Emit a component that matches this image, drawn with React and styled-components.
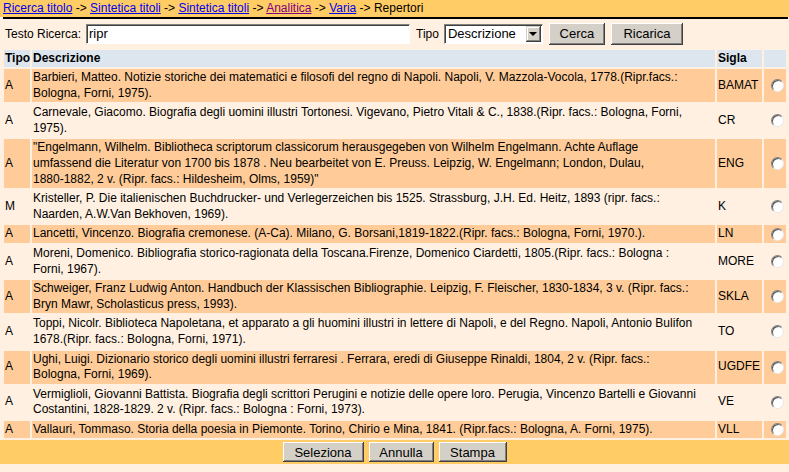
import React from 'react';
import styled, { createGlobalStyle } from 'styled-components';

const Page = createGlobalStyle`
  body {
    margin: 0;
    background: #fff0e1;
    font-family: "Liberation Sans", Arial, sans-serif;
    color: #000;
  }
`;

const Crumbs = styled.div`
  background: #ffcc66;
  height: 17px;
  padding: 0 3px;
  font-size: 12px;
  line-height: 16px;
  white-space: nowrap;
`;

const Crumb = styled.a`
  color: ${props => props.visited ? '#800080' : '#0000ee'};
  text-decoration: underline;
`;

const Rule = styled.div`
  height: 2px;
  margin: 0 1px 0 3px;
  background: #000;
`;

const SearchBar = styled.form`
  display: flex;
  align-items: center;
  height: 29px;
  padding: 0 4px 0 5px;
  box-sizing: border-box;
  font-size: 12px;
`;

const Label = styled.label`
  margin-right: ${props => props.gap || 3}px;
`;

const TextInput = styled.input`
  width: 324px;
  height: 20px;
  box-sizing: border-box;
  margin: 0 6px 0 0;
  padding: 0 2px;
  border: 1px solid;
  border-color: #808080 #fff #fff #808080;
  box-shadow: inset 1px 1px 0 #404040;
  background: #fff;
  font: 13px "Liberation Sans", Arial, sans-serif;
  outline: none;
`;

const Select = styled.div`
  display: flex;
  align-items: center;
  width: 99px;
  height: 20px;
  box-sizing: border-box;
  margin-right: 6px;
  border: 1px solid;
  border-color: #808080 #fff #fff #808080;
  box-shadow: inset 1px 1px 0 #404040;
  background: #fff;
  font-size: 13px;
`;

const SelectValue = styled.span`
  flex: 1;
  padding-left: 3px;
`;

const SelectArrow = styled.span`
  display: flex;
  align-items: center;
  justify-content: center;
  width: 15px;
  height: 16px;
  margin: 1px 1px 1px 0;
  box-sizing: border-box;
  background: #d4d0c8;
  box-shadow: inset -1px -1px #404040, inset 1px 1px #d4d0c8, inset -2px -2px #808080, inset 2px 2px #fff;
  &::after {
    content: '';
    border-left: 4px solid transparent;
    border-right: 4px solid transparent;
    border-top: 4px solid #000;
    margin-top: 1px;
  }
`;

const Button = styled.button`
  width: ${props => props.w}px;
  height: ${props => props.tall ? 22 : 20}px;
  padding: 0;
  margin-right: ${props => props.gap || 0}px;
  background: #d4d0c8;
  border: none;
  box-shadow: inset -1px -1px #404040, inset 1px 1px #fff, inset -2px -2px #808080, inset 2px 2px #d4d0c8;
  font: 13px "Liberation Sans", Arial, sans-serif;
  color: #000;
`;

const Table = styled.table`
  width: calc(100% - 3px);
  margin-left: 2px;
  border-collapse: separate;
  border-spacing: 2px;
  table-layout: fixed;
  font-size: 12px;
  line-height: 15.6px;
`;

const Head = styled.th`
  background: #dde6ee;
  text-align: left;
  font-weight: bold;
  padding: 1px;
  height: 15px;
  line-height: 15px;
`;

const Cell = styled.td`
  background: ${props => props.odd ? '#ffcc99' : 'transparent'};
  padding: 1px 1px;
  vertical-align: middle;
  text-align: ${props => props.center ? 'center' : 'left'};
`;

const Radio = styled.input.attrs({ type: 'radio' })`
  appearance: none;
  display: block;
  width: 13px;
  height: 13px;
  margin: 0 0 0 6px;
  border-radius: 50%;
  border: 1px solid;
  border-color: #808080 #e8e8e8 #e8e8e8 #808080;
  box-sizing: border-box;
  background: #fff;
  box-shadow: inset 1px 1px 0 #555;
`;

const Footer = styled.div`
  display: flex;
  justify-content: center;
  gap: 5px;
  height: 24px;
  align-items: center;
  background: #ffcc66;
`;

const rows = [
  ['A', ['Barbieri, Matteo. Notizie storiche dei matematici e filosofi del regno di Napoli. Napoli, V. Mazzola-Vocola, 1778.(Ripr.facs.:', 'Bologna, Forni, 1975).'], 'BAMAT'],
  ['A', ['Carnevale, Giacomo. Biografia degli uomini illustri Tortonesi. Vigevano, Pietro Vitali & C., 1838.(Ripr. facs.: Bologna, Forni,', '1975).'], 'CR'],
  ['A', ['"Engelmann, Wilhelm. Bibliotheca scriptorum classicorum herausgegeben von Wilhelm Engelmann. Achte Auflage', 'umfassend die Literatur von 1700 bis 1878 . Neu bearbeitet von E. Preuss. Leipzig, W. Engelmann; London, Dulau,', '1880-1882, 2 v. (Ripr. facs.: Hildesheim, Olms, 1959)"'], 'ENG'],
  ['M', ['Kristeller, P. Die italienischen Buchdrucker- und Verlegerzeichen bis 1525. Strassburg, J.H. Ed. Heitz, 1893 (ripr. facs.:', 'Naarden, A.W.Van Bekhoven, 1969).'], 'K'],
  ['A', ['Lancetti, Vincenzo. Biografia cremonese. (A-Ca). Milano, G. Borsani,1819-1822.(Ripr. facs.: Bologna, Forni, 1970.).'], 'LN'],
  ['A', ['Moreni, Domenico. Bibliografia storico-ragionata della Toscana.Firenze, Domenico Ciardetti, 1805.(Ripr. facs.: Bologna :', 'Forni, 1967).'], 'MORE'],
  ['A', ['Schweiger, Franz Ludwig Anton. Handbuch der Klassischen Bibliographie. Leipzig, F. Fleischer, 1830-1834, 3 v. (Ripr. facs.:', 'Bryn Mawr, Scholasticus press, 1993).'], 'SKLA'],
  ['A', ['Toppi, Nicolr. Biblioteca Napoletana, et apparato a gli huomini illustri in lettere di Napoli, e del Regno. Napoli, Antonio Bulifon', '1678.(Ripr. facs.: Bologna, Forni, 1971).'], 'TO'],
  ['A', ['Ughi, Luigi. Dizionario storico degli uomini illustri ferraresi . Ferrara, eredi di Giuseppe Rinaldi, 1804, 2 v. (Ripr. facs.:', 'Bologna, Forni, 1969).'], 'UGDFE'],
  ['A', ['Vermiglioli, Giovanni Battista. Biografia degli scrittori Perugini e notizie delle opere loro. Perugia, Vincenzo Bartelli e Giovanni', 'Costantini, 1828-1829. 2 v. (Ripr. facs.: Bologna : Forni, 1973).'], 'VE'],
  ['A', ['Vallauri, Tommaso. Storia della poesia in Piemonte. Torino, Chirio e Mina, 1841. (Ripr.facs.: Bologna, A. Forni, 1975).'], 'VLL'],
];

const path = [
  ['Ricerca titolo'],
  ['Sintetica titoli'],
  ['Sintetica titoli'],
  ['Analitica', true],
  ['Varia'],
];

export default function App() {
  return (
    <>
      <Page />
      <Crumbs>
        {path.map(([label, visited], i) => (
          <React.Fragment key={i}>
            <Crumb href="#" visited={visited ? 1 : 0}>{label}</Crumb>{' -> '}
          </React.Fragment>
        ))}
        Repertori
      </Crumbs>
      <Rule />
      <SearchBar onSubmit={e => e.preventDefault()}>
        <Label gap={5}>Testo Ricerca:</Label>
        <TextInput defaultValue="ripr" />
        <Label gap={5}>Tipo</Label>
        <Select>
          <SelectValue>Descrizione</SelectValue>
          <SelectArrow />
        </Select>
        <Button tall w={56} gap={6}>Cerca</Button>
        <Button tall w={72}>Ricarica</Button>
      </SearchBar>
      <Table>
        <colgroup>
          <col style={{ width: 26 }} />
          <col />
          <col style={{ width: 45 }} />
          <col style={{ width: 22 }} />
        </colgroup>
        <thead>
          <tr>
            <Head>Tipo</Head>
            <Head>Descrizione</Head>
            <Head>Sigla</Head>
            <Head />
          </tr>
        </thead>
        <tbody>
          {rows.map(([tipo, lines, sigla], i) => (
            <tr key={sigla}>
              <Cell odd={i % 2 === 0}>{tipo}</Cell>
              <Cell odd={i % 2 === 0}>
                {lines.map((line, j) => (
                  <React.Fragment key={j}>{j > 0 && <br />}{line}</React.Fragment>
                ))}
              </Cell>
              <Cell odd={i % 2 === 0}>{sigla}</Cell>
              <Cell odd={i % 2 === 0}><Radio name="rep" /></Cell>
            </tr>
          ))}
        </tbody>
      </Table>
      <Footer>
        <Button w={81}>Seleziona</Button>
        <Button w={65}>Annulla</Button>
        <Button w={68}>Stampa</Button>
      </Footer>
    </>
  );
}
